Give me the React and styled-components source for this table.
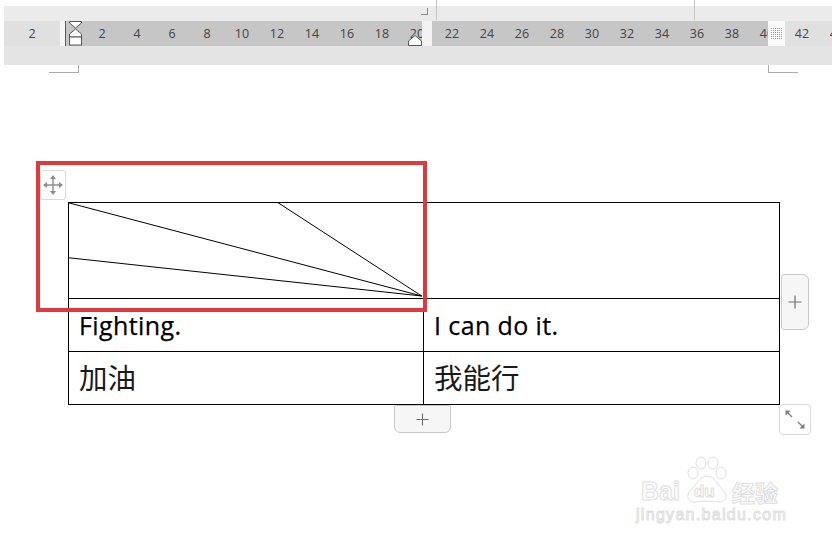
import React from "react";
import styled, { createGlobalStyle } from "styled-components";

const GlobalStyle = createGlobalStyle`
  html, body { margin: 0; padding: 0; background: #fff; }
  body { font-family: "Open Sans", "Noto Sans CJK SC", sans-serif; }
  #root { width: 832px; height: 549px; }
`;

const Page = styled.div`
  position: relative;
  width: 832px;
  height: 549px;
  overflow: hidden;
  background: #fff;
  padding-top: 6px;
  box-sizing: border-box;
`;

/* ---------- Ruler ---------- */
const Ruler = styled.div`
  position: relative;
  margin-left: 4px;
  height: 59px;
  display: flex;
  flex-direction: column;
`;

const RulerTop = styled.div`
  position: relative;
  height: 15px;
  background: #ebebeb;
`;

const TopLine = styled.div`
  position: absolute;
  left: ${(p) => p.$x}px;
  top: -6px;
  width: 1px;
  height: 20px;
  background: #c4c4c4;
`;

const CornerGlyph = styled.div`
  position: absolute;
  left: 417px;
  top: 2px;
  width: 6px;
  height: 6px;
  border-right: 1px solid #8a8a8a;
  border-bottom: 1px solid #8a8a8a;
`;

const RulerScale = styled.div`
  position: relative;
  height: 25px;
  display: flex;
  padding-left: 10.5px;
  overflow: hidden;
  background: linear-gradient(
    to right,
    #e0e0e0 0 56px,
    #f7f7f7 56px 61px,
    #5a5a5a 61px 62px,
    #c6c6c6 62px 764px,
    #e0e0e0 764px
  );
`;

const Tick = styled.span`
  flex: 0 0 35px;
  text-align: center;
  font-family: "Open Sans", sans-serif;
  font-size: 12.5px;
  line-height: 25px;
  color: #444;
  white-space: nowrap;
`;

const ColumnMarker = styled.div`
  position: absolute;
  top: 0;
  bottom: 0;
  left: 418px;
  width: 10px;
  background: #f3f3f3;
`;

const GridMarker = styled.div`
  position: absolute;
  top: 0;
  bottom: 0;
  left: 764px;
  width: 17px;
  background: #fafafa;
  display: flex;
  align-items: center;
  justify-content: center;
`;

const IndentMarker = styled.svg`
  position: absolute;
  left: ${(p) => p.$x}px;
  top: ${(p) => p.$y}px;
`;

const RulerBottom = styled.div`
  height: 19px;
  background: #e4e4e4;
`;

/* ---------- page corner marks ---------- */
const CornerRow = styled.div`
  display: flex;
  justify-content: space-between;
  height: 8px;
  padding: 0 34px 0 49px;
`;

const CornerMark = styled.div`
  width: 29px;
  height: 7px;
  border-bottom: 1px solid #ababab;
  ${(p) => (p.$side === "left" ? "border-right" : "border-left")}: 1px solid #ababab;
`;

/* ---------- table ---------- */
const TableArea = styled.div`
  position: relative;
  margin: 129px 0 0 68px;
  width: 712px;
`;

const Grid = styled.div`
  display: grid;
  grid-template-columns: 355px 356px;
  grid-template-rows: 96px 53px 53px;
  width: max-content;
  border-top: 1px solid #000;
  border-left: 1px solid #000;
`;

const Cell = styled.div`
  position: relative;
  box-sizing: border-box;
  border-right: 1px solid #000;
  border-bottom: 1px solid #000;
  display: flex;
  align-items: center;
  padding-left: 10px;
  color: ${(p) => (p.$cjk ? "#1a1a1a" : "#000")};
  font-family: ${(p) =>
    p.$cjk ? `"Noto Sans CJK SC", sans-serif` : `"Open Sans", sans-serif`};
  font-size: ${(p) => (p.$cjk ? "28.5px" : "25px")};
  letter-spacing: ${(p) => (p.$cjk ? "0" : "0.4px")};
  -webkit-text-stroke: ${(p) => (p.$cjk ? "0" : "0.25px #000")};
  line-height: ${(p) => (p.$cjk ? "34px" : "25px")};
  padding-bottom: ${(p) => (p.$cjk ? "3px" : "0")};
  padding-top: ${(p) => (p.$cjk ? "0" : "1px")};
`;

const Diagonals = styled.svg`
  position: absolute;
  left: 0;
  top: 0;
  overflow: visible;
`;

const Highlight = styled.div`
  position: absolute;
  left: -32px;
  top: -41px;
  width: 391px;
  height: 151px;
  box-sizing: border-box;
  border: 4px solid #e0393d;
  pointer-events: none;
`;

const HandleButton = styled.div`
  position: absolute;
  box-sizing: border-box;
  left: ${(p) => p.$x}px;
  top: ${(p) => p.$y}px;
  width: ${(p) => p.$w}px;
  height: ${(p) => p.$h}px;
  border: 1px solid ${(p) => (p.$tone === "add" ? "#c9c9c9" : "#d9d9d9")};
  border-radius: ${(p) => p.$radius};
  background: ${(p) => (p.$tone === "add" ? "#f6f6f6" : "#fff")};
  display: flex;
  align-items: center;
  justify-content: center;
`;

/* ---------- watermark ---------- */
const Watermark = styled.div`
  position: absolute;
  left: 634px;
  top: 456px;
  display: flex;
  flex-direction: column;
  align-items: flex-start;
  gap: 3px;
  pointer-events: none;
`;

const MarkRow = styled.div`
  display: flex;
  align-items: flex-end;
`;

const OutlineText = styled.span`
  color: #fff;
  -webkit-text-stroke: 1px #dedede;
  font-family: ${(p) =>
    p.$cjk ? `"Noto Sans CJK SC", sans-serif` : `"Liberation Sans", sans-serif`};
  font-weight: ${(p) => (p.$light ? 400 : 700)};
  font-size: ${(p) => p.$size}px;
  line-height: 1;
  letter-spacing: ${(p) => p.$ls || 0}px;
  margin-left: ${(p) => p.$ml || 0}px;
`;

const Paw = styled.div`
  position: relative;
  width: 46px;
  height: 48px;
  margin-left: 4px;
`;

const PawText = styled.span`
  position: absolute;
  left: 10px;
  top: 27px;
  color: #fff;
  -webkit-text-stroke: 1px #dedede;
  font-family: "Liberation Sans", sans-serif;
  font-weight: 700;
  font-size: 17px;
  line-height: 1;
`;

const Plus = ({ size = 14 }) => (
  <svg width={size} height={size} viewBox="0 0 14 14">
    <path d="M7 0.5V13.5M0.5 7H13.5" stroke="#6f6f6f" strokeWidth="1.2" />
  </svg>
);

const ticks = ["2", "", ...Array.from({ length: 22 }, (_, i) => String((i + 1) * 2))];

export default function App() {
  return (
    <Page>
      <GlobalStyle />
      <Ruler>
        <RulerTop>
          <CornerGlyph />
          <TopLine $x={432} />
          <TopLine $x={690} />
        </RulerTop>
        <RulerScale>
          {ticks.map((t, i) => (
            <Tick key={i}>{t}</Tick>
          ))}
          <IndentMarker $x={65} $y={0} width="14" height="25" viewBox="0 0 14 25">
            <path d="M0.5 0.5H12.5V2L6.5 7L0.5 2Z" fill="#fff" stroke="#555" />
            <path d="M6.5 8L12.5 13V16H0.5V13Z" fill="#fff" stroke="#555" />
            <rect x="0.5" y="16" width="12" height="8" fill="#fff" stroke="#555" />
          </IndentMarker>
          <IndentMarker $x={404} $y={14} width="15" height="11" viewBox="0 0 15 11">
            <path d="M7 0.5L13.5 6V10.5H0.5V6Z" fill="#fff" stroke="#555" />
          </IndentMarker>
          <ColumnMarker />
          <GridMarker>
            <svg width="11" height="11" viewBox="0 0 11 11">
              {[0, 2, 4, 6, 8, 10].map((y) =>
                [0, 2, 4, 6, 8, 10].map((x) => (
                  <rect key={`${x}-${y}`} x={x} y={y} width="1" height="1" fill="#9a9a9a" />
                ))
              )}
            </svg>
          </GridMarker>
        </RulerScale>
        <RulerBottom />
      </Ruler>

      <CornerRow>
        <CornerMark $side="left" />
        <CornerMark $side="right" />
      </CornerRow>

      <TableArea>
        <Grid>
          <Cell>
            <Diagonals width="354" height="95" viewBox="0 0 354 95">
              <g stroke="#000" strokeWidth="1" fill="none">
                <line x1="-0.7" y1="-0.3" x2="352.7" y2="93" />
                <line x1="-1" y1="54.7" x2="352.7" y2="93" />
                <line x1="209" y1="-0.3" x2="352.7" y2="93" />
              </g>
            </Diagonals>
          </Cell>
          <Cell />
          <Cell>Fighting.</Cell>
          <Cell>I can do it.</Cell>
          <Cell $cjk>加油</Cell>
          <Cell $cjk>我能行</Cell>
        </Grid>

        <Highlight />

        <HandleButton $x={-28} $y={-32} $w={26} $h={30} $radius="3px">
          <svg width="22" height="22" viewBox="0 0 22 22">
            <g stroke="#8c8c8c" strokeWidth="1.4">
              <path d="M11 3.5V18.5M3.5 11H18.5" />
            </g>
            <g fill="#8c8c8c">
              <path d="M11 1L14 5H8Z" />
              <path d="M11 21L14 17H8Z" />
              <path d="M1 11L5 8V14Z" />
              <path d="M21 11L17 8V14Z" />
            </g>
          </svg>
        </HandleButton>

        <HandleButton $tone="add" $x={713} $y={72} $w={28} $h={56} $radius="3px 6px 6px 3px">
          <Plus />
        </HandleButton>

        <HandleButton $tone="add" $x={326} $y={203} $w={57} $h={28} $radius="2px 2px 6px 6px">
          <Plus size={13} />
        </HandleButton>

        <HandleButton $x={711} $y={202} $w={32} $h={31} $radius="4px">
          <svg width="30" height="29" viewBox="0 0 30 29">
            <g stroke="#7a7a7a" strokeWidth="1.3" fill="none">
              <path d="M7 7L12 12" />
              <path d="M18 17L23 22" />
            </g>
            <g fill="#7a7a7a">
              <path d="M5.5 5.5H10.5L5.5 10.5Z" />
              <path d="M24.5 23.5H19.5L24.5 18.5Z" />
            </g>
          </svg>
        </HandleButton>
      </TableArea>

      <Watermark>
        <MarkRow>
          <OutlineText $size={25} $ml={7}>Bai</OutlineText>
          <Paw>
            <svg width="46" height="48" viewBox="0 0 46 48">
              <g fill="#fff" stroke="#dedede" strokeWidth="1">
                <ellipse cx="9" cy="17" rx="5" ry="6" />
                <ellipse cx="17" cy="7" rx="5" ry="6" />
                <ellipse cx="29" cy="7" rx="5" ry="6" />
                <ellipse cx="37" cy="17" rx="5" ry="6" />
                <path d="M23 20C15 20 12 30 6 35C1 40 5 47 12 46C18 45 28 45 34 46C41 47 45 40 40 35C34 30 31 20 23 20Z" />
              </g>
            </svg>
            <PawText>du</PawText>
          </Paw>
          <OutlineText $cjk $size={23} $ml={2}>经验</OutlineText>
        </MarkRow>
        <OutlineText $light $size={16} $ls={1.3} $ml={2}>
          jingyan.baidu.com
        </OutlineText>
      </Watermark>
    </Page>
  );
}
